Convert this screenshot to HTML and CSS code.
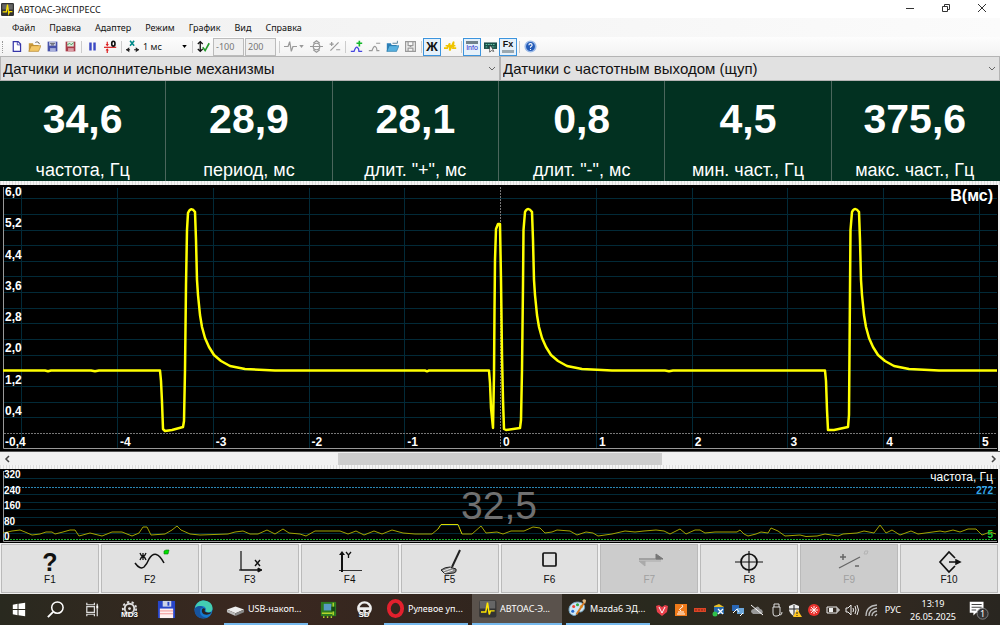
FILE: index.html
```html
<!DOCTYPE html>
<html lang="ru">
<head>
  <meta charset="UTF-8">
  <meta name="viewport" content="width=device-width, initial-scale=1.0">
  <title>АВТОАС-ЭКСПРЕСС</title>
  <link rel="stylesheet" href="styles.css">
</head>
<body>
  <header class="titlebar">
    <svg class="app-icon" viewBox="0 0 32 32"><rect width="32" height="32" rx="3" fill="#333"/><path d="M3 3h26v13H3z" fill="#666"/><path d="M4 22h9l3-18 3 22 2-5h7" fill="none" stroke="#ffe600" stroke-width="3"/></svg>
    <h1>АВТОАС-ЭКСПРЕСС</h1>
    <div class="window-buttons">
      <button aria-label="Свернуть"><svg viewBox="0 0 10 10"><path d="M1 5.500h8"/></svg></button>
      <button aria-label="Развернуть"><svg viewBox="0 0 10 10"><path d="M1.500 3.500h5v5h-5zM3.500 3.500v-2h5v5h-2"/></svg></button>
      <button aria-label="Закрыть"><svg viewBox="0 0 10 10"><path d="M1 1l8 8M9 1l-8 8"/></svg></button>
    </div>
  </header>

  <nav class="menu">
    <button>Файл</button>
    <button>Правка</button>
    <button>Адаптер</button>
    <button>Режим</button>
    <button>График</button>
    <button>Вид</button>
    <button>Справка</button>
  </nav>

  <div class="toolbar">
    <span class="grip"></span>
    <button aria-label="Новый"><svg viewBox="0 0 16 16"><path d="M4 2h6l3 3v9H4z" fill="#fff" stroke="#3535a8" stroke-width="1.500"/><path d="M9 2v4h4" fill="none" stroke="#3535a8"/></svg></button>
    <button aria-label="Открыть"><svg viewBox="0 0 16 16"><path d="M1 14V4h5l1 2h6v3" fill="#c99a3a"/><path d="M1 14l3-7h12l-3 7z" fill="#f3c766" stroke="#a87a28" stroke-width=".7"/><path d="M9 3q4-2 5 2" fill="none" stroke="#444"/></svg></button>
    <button aria-label="Сохранить"><svg viewBox="0 0 16 16"><path d="M2 2h12v12H2z" fill="#4752a8"/><path d="M4 2h8v5H4z" fill="#d5daf0"/><path d="M5 10h7v4H5z" fill="#a9b0dc"/><path d="M5 4h6M6 6h4" stroke="#333"/></svg></button>
    <button aria-label="Сохранить график"><svg viewBox="0 0 16 16"><path d="M2 2h12v12H2z" fill="#a93b48"/><path d="M4 2h8v6H4z" fill="#d8ecdc"/><path d="M5 10h7v4H5z" fill="#d99ca4"/><path d="M4 6l3-2 2 2 3-3" fill="none" stroke="#2d8b45"/></svg></button>
    <span class="sep"></span>
    <button aria-label="Пауза"><svg viewBox="0 0 16 16"><path d="M4 3h3v10H4zM9 3h3v10H9z" fill="#3b49c4"/></svg></button>
    <button aria-label="Ноль"><svg viewBox="0 0 16 16"><path d="M0 9h15" stroke="#d22" stroke-width="1.500"/><path d="M4 2v4M4 16v-5" stroke="#d22" stroke-width="1.500"/><path d="M2 5l2 3 2-3zM2 13l2-3 2 3z" fill="#d22"/><ellipse cx="11.500" cy="4.500" rx="2" ry="3" fill="none" stroke="#111" stroke-width="2"/></svg></button>
    <span class="sep"></span>
    <button aria-label="Масштаб по X"><svg viewBox="0 0 16 16"><path d="M5 1l5 6M10 1L5 7" stroke="#008a8a" stroke-width="2"/><path d="M0 12h5M10 12h6" stroke="#222" stroke-width="1.500"/><path d="M4 9l-4 3 4 3zM12 9l4 3-4 3z" fill="#222"/></svg></button>
    <select class="time-scale" aria-label="Развёртка"><option>1 мс</option></select>
    <svg class="drop" viewBox="0 0 6 4"><path d="M0 0h6L3 4z"/></svg>
    <span class="sep"></span>
    <button aria-label="Масштаб по Y"><svg viewBox="0 0 16 16"><path d="M4 3v10M1 5l3-3 3 3M1 11l3 3 3-3" fill="none" stroke="#111" stroke-width="1.600"/><path d="M7 9l3 4 5-9" fill="none" stroke="#239a2a" stroke-width="2"/></svg></button>
    <div class="limits">
      <input type="text" value="-100" aria-label="Минимум" disabled>
      <input type="text" value="200" aria-label="Максимум" disabled>
    </div>
    <span class="sep"></span>
    <button class="off" aria-label="Синхронизация"><svg viewBox="0 0 16 16"><path d="M0 8h5l2-6 2 12 2-6h5"/></svg></button>
    <svg class="drop drop-off" viewBox="0 0 6 4"><path d="M0 0h6L3 4z"/></svg>
    <button class="off" aria-label="Сдвиг"><svg viewBox="0 0 16 16"><circle cx="8" cy="8" r="4"/><path d="M0 8h16M4 4l4-3 4 3M4 12l4 3 4-3"/></svg></button>
    <button class="off" aria-label="Полярность"><svg viewBox="0 0 16 16"><path d="M3 13L13 3M2 5h5M4.500 2.500v5M10 12h5"/></svg></button>
    <span class="sep"></span>
    <button aria-label="Добавить кривую"><svg viewBox="0 0 16 16"><path d="M1 14h4q2-6 4-5t2 5h4" fill="none" stroke="#4545df" stroke-width="1.600"/><path d="M8 4h7M11.500 1v7" stroke="#13b82a" stroke-width="2"/></svg></button>
    <button class="off" aria-label="Удалить кривую"><svg viewBox="0 0 16 16"><path d="M1 13h4q2-6 4-5t2 5h3M10 4h5"/></svg></button>
    <button aria-label="Открыть кривую"><svg viewBox="0 0 16 16"><path d="M1 14V4h5l1 2h6v3" fill="#2b7fb8"/><path d="M1 14l3-7h12l-3 7z" fill="#58b1e0" stroke="#24719f" stroke-width=".7"/><path d="M8 4h6V1" fill="none" stroke="#396b89"/></svg></button>
    <button class="off" aria-label="Сохранить кривую"><svg viewBox="0 0 16 16"><path d="M2 2h12v12H2zM5 2v5h6V2M5 14v-4h6v4M7 8h2"/></svg></button>
    <span class="sep"></span>
    <button class="checked glyph-zh" aria-pressed="true">Ж</button>
    <button aria-label="Усреднение"><svg viewBox="0 0 16 16"><path d="M0 10h4l3-6v9l5-11-1 8h4M2 7h12" fill="none" stroke="#efc400" stroke-width="2"/></svg></button>
    <span class="sep"></span>
    <button class="checked info" aria-pressed="true"><span class="info-bars"></span>Info</button>
    <button aria-label="Экран"><svg viewBox="0 0 16 16"><path d="M0 3h16v8H0z" fill="#184d47"/><path d="M2 5.500h12M2 8.500h3M10 8.500h4" stroke="#7de0bb" stroke-dasharray="2 1"/><path d="M7 7v8l2-2 3 1-3-6z" fill="#fff" stroke="#222" stroke-width=".8"/></svg></button>
    <button class="checked fx" aria-pressed="true">Fx<span class="fx-line"></span></button>
    <span class="sep"></span>
    <button aria-label="Справка"><svg viewBox="0 0 16 16"><circle cx="8" cy="8" r="6.500" fill="#235bb8" stroke="#9dbbe8" stroke-width="2"/><path d="M6 6.500q0-2 2-2t2 2q0 1-2 2v1M8 11v1.300" fill="none" stroke="#fff" stroke-width="1.400"/></svg></button>
  </div>

  <div class="sources">
    <label class="source">
      <select aria-label="Режим"><option>Датчики и исполнительные механизмы</option></select>
      <svg viewBox="0 0 8 5"><path d="M1 1l3 3 3-3"/></svg>
    </label>
    <label class="source">
      <select aria-label="Тип датчика"><option>Датчики с частотным выходом (щуп)</option></select>
      <svg viewBox="0 0 8 5"><path d="M1 1l3 3 3-3"/></svg>
    </label>
  </div>

  <section class="readings">
    <div class="reading"><strong>34,6</strong><span>частота, Гц</span></div>
    <div class="reading"><strong>28,9</strong><span>период, мс</span></div>
    <div class="reading"><strong>28,1</strong><span>длит. "+", мс</span></div>
    <div class="reading"><strong>0,8</strong><span>длит. "-", мс</span></div>
    <div class="reading"><strong>4,5</strong><span>мин. част., Гц</span></div>
    <div class="reading"><strong>375,6</strong><span>макс. част., Гц</span></div>
  </section>
  <div class="splitter"></div>

  <main class="scope">
    <svg class="plot" viewBox="0 185 998 266" preserveAspectRatio="none">
      <path class="grid-line" d="M4 198.500H997M4 214.500H997M4 230.500H997M4 245.500H997M4 261.500H997M4 276.500H997M4 292.500H997M4 308.500H997M4 323.500H997M4 339.500H997M4 355.500H997M4 370.500H997M4 386.500H997M4 402.500H997M4 417.500H997"/>
      <path class="grid-line" d="M21.500 188V448M117.500 188V448M213.500 188V448M309.500 188V448M404.500 188V448M596.500 188V448M692.500 188V448M787.500 188V448M883.500 188V448M979.500 188V448"/>
      <path class="zero-line" d="M4 433.500H997M500.500 187V448"/>
      <path class="axis" d="M3.500 187V448.500H997"/>
      <path class="trace" d="M3 370.500H45l3 .8 3-.8H91l4 .8 4-.8H160L161 381 162 402 163 429 165 431 172 430 183 427 184 421 185 370 186 285 187 230 188 213Q191 206 195 212L196 240 197 280 198 295 200 315 202 327 205 338 209 347 214 355 221 361 230 366 245 369 275 370.500H425l2 .8 2-.8H489L490 383 491 408 493 428 494 375 494.500 310 495 260 496 229 498 224 500 224 501 280 502 355 503 400 504 429 506 430 520 428 521 420 522 370 523 285 523.500 230 525 212Q528 206 532 212L533 240 534 280 535 295 537 315 539 327 542 338 546 347 551 355 558 361 567 366 582 369 612 370.500H665l4 .8 4-.8H825L826 381 827 410 828 430 834 430 848 427 849 415 850 290 850.500 230 852 212Q855 206 859 212L860 240 861 280 862 295 864 315 866 327 869 338 873 347 878 355 885 361 894 366 909 369 939 370.500H997"/>
    </svg>
    <div class="y-labels">
      <span>6,0</span><span>5,2</span><span>4,4</span><span>3,6</span><span>2,8</span><span>2,0</span><span>1,2</span><span>0,4</span><span>-0,4</span>
    </div>
    <div class="x-labels">
      <span>-4</span><span>-3</span><span>-2</span><span>-1</span><span>0</span><span>1</span><span>2</span><span>3</span><span>4</span><span>5</span>
    </div>
    <div class="units">В(мс)</div>
  </main>

  <div class="scroll">
    <button aria-label="Назад"><svg viewBox="0 0 6 8"><path d="M5 1L2 4l3 3"/></svg></button>
    <input type="range" min="0" max="100" value="50" aria-label="Прокрутка графика">
    <button aria-label="Вперёд"><svg viewBox="0 0 6 8"><path d="M1 1l3 3-3 3"/></svg></button>
  </div>
  <div class="splitter"></div>

  <section class="history">
    <svg class="plot" viewBox="0 469 998 74" preserveAspectRatio="none">
      <path class="grid-line" d="M4 478.500H996M4 494.500H996M4 502.500H996M4 509.500H996M4 517.500H996M4 525.500H996M4 533.500H996"/>
      <path class="max-line" d="M4 487.500H996"/>
      <path class="min-line" d="M4 539.500H996"/>
      <path class="axis" d="M3.500 471V541.500H997"/>
      <polyline class="history-trace" points="3,533 12,531 20,530 25,532 32,535 40,534 46,532 52,532 55,534 63,532 70,530 75,530 79,536 90,533 102,536 112,532 122,532 132,536 139,533 143,527 147,527 151,535 165,534 172,530 177,526 181,530 190,534 200,535 228,534 235,532 243,531 250,534 258,534 267,530 275,534 283,529 289,533 300,534 306,536 315,531 340,531 348,534 356,531 364,535 374,531 382,534 392,530 403,533 415,534 432,534 438,529"/>
      <polyline class="history-trace history-peak" points="438,529 441,524.500 458,524.500 462,534"/>
      <polyline class="history-trace" points="462,534 472,534 481,526 486,533 497,532 503,534 511,531 524,531 533,527 540,528 545,533 552,532 557,530 570,531 577,535 586,532 593,533 598,536 612,534 625,531 635,532 644,531 656,530 664,531 670,534 680,529 686,534 695,530 700,530 705,533 715,532 737,532 740,530 744,534 748,536 756,534 761,532 768,533 771,528 778,531 785,536 800,535 806,536.500 817,536 825,534 838,536 843,534 857,533 864,531 874,533 880,525 886,533 892,530 900,535 911,531 918,534 940,531 945,532 953,530 960,532 968,529 976,529 982,535 990,532 996,534"/>
    </svg>
    <div class="history-labels"><span>320</span><span>240</span><span>160</span><span>80</span><span>0</span></div>
    <div class="history-value">32,5</div>
    <div class="history-side">
      <span>частота, Гц</span>
      <b class="max">272</b>
      <b class="min">5</b>
    </div>
  </section>

  <div class="keys">
    <button><span class="question">?</span>F1</button>
    <button><svg viewBox="0 0 36 24"><path d="M3 13q5 7 9 4 3-3 5-8 7-11 15 4" fill="none" stroke="#111" stroke-width="1.500"/><path d="M11 3v7M8 3q1 3 3 3.500Q9 7 8 10M14 3Q13 6 11 6.500 13 7 14 10" fill="none" stroke="#111" stroke-width="1.300"/><path d="M34 0h3l-1 4h-4v-3z" fill="#00e000" stroke="#087a08" stroke-width=".6"/></svg>F2</button>
    <button><svg viewBox="0 0 36 24"><path d="M9 1v19h20" fill="none" stroke="#111" stroke-width="1.200"/><path d="M7 20h22M26 18l4 2-4 2z" fill="#111" stroke="#111"/><path d="M23 10l5 6M28 10l-5 6" stroke="#111" stroke-width="1.400"/></svg>F3</button>
    <button><svg viewBox="0 0 36 24"><path d="M10 22V2M7 20.500h23" fill="none" stroke="#333"/><path d="M10 22V4" stroke="#111" stroke-width="2"/><path d="M7 5l3-4 3 4z" fill="#111"/><path d="M14 2l2.500 3L19 2M16.500 5v3" fill="none" stroke="#111" stroke-width="1.300"/></svg>F4</button>
    <button><svg viewBox="0 0 36 24"><path d="M28 0L20 17" stroke="#222" stroke-width="2"/><path d="M9 20q4-3 9-3l6 2q1 3-2 4l-9 1z" fill="#888" stroke="#222"/><path d="M11 21l8-3M12 23l9-3" stroke="#eee"/></svg>F5</button>
    <button><svg viewBox="0 0 36 24"><rect x="12" y="3" width="13" height="13" rx="1" fill="none" stroke="#111" stroke-width="1.700"/></svg>F6</button>
    <button disabled><svg viewBox="0 0 36 24"><path d="M8 9h22M25 4l7 5h-7z" fill="#777" stroke="#777"/><path d="M30 11H8l6 5v-5" fill="#aaa" stroke="#aaa"/></svg>F7</button>
    <button><svg viewBox="0 0 36 24"><circle cx="18" cy="12" r="8" fill="none" stroke="#111" stroke-width="1.700"/><path d="M4 12h28M18 1v22" stroke="#111" stroke-width="1.200"/></svg>F8</button>
    <button disabled><svg viewBox="0 0 36 24"><path d="M8 18L29 7" stroke="#666" stroke-width="1.300"/><path d="M9 7h6M12 4v6M24 16h4" stroke="#666" stroke-width="1.500"/><path d="M34 1h3l-1 3h-3z" fill="none" stroke="#b4b4b4"/></svg>F9</button>
    <button><svg viewBox="0 0 36 24"><path d="M24 8l-6-6-9 10 9 10 6-6" fill="none" stroke="#111" stroke-width="1.700"/><path d="M18 12h10M25 10l4 2-4 2z" fill="#111" stroke="#111" stroke-width="1.500"/></svg>F10</button>
  </div>

  <footer class="taskbar">
    <div class="launchers">
      <button aria-label="Пуск"><svg viewBox="0 0 20 20"><path d="M4 5l5-1v5.500H4zM10 4l7-1v6.500h-7zM4 10.500h5V16l-5-1zM10 10.500h7V17l-7-1z" fill="#fff"/></svg></button>
      <button aria-label="Поиск"><svg viewBox="0 0 20 20"><circle cx="12" cy="8" r="6" fill="none" stroke="#fff" stroke-width="1.600"/><path d="M7.500 12.500L2 18" stroke="#fff" stroke-width="2"/></svg></button>
      <button aria-label="Представление задач"><svg viewBox="0 0 20 20"><path d="M4 7h8v6H4zM4 3v2h8V3M4 17v-2h8v2M15 4v3M15 9v8" fill="none" stroke="#ddd" stroke-width="1.300"/><path d="M14 6h2v3h-2z" fill="#fff"/></svg></button>
      <button aria-label="MD3" class="md3"><svg viewBox="0 0 20 20"><circle cx="10" cy="9" r="5" fill="none" stroke="#ddd" stroke-width="2"/><circle cx="10" cy="9" r="7" fill="none" stroke="#ddd" stroke-width="2" stroke-dasharray="2.500 2.500"/><circle cx="10" cy="9" r="1.500" fill="#ddd"/></svg><b>MD3</b></button>
      <button aria-label="Файловый менеджер"><svg viewBox="0 0 20 20"><path d="M1 1h18v18H1z" fill="#2745c9"/><path d="M6 1h9v6H6z" fill="#cdd3e8"/><path d="M11 2h2v4h-2z" fill="#2745c9"/><path d="M3 9h14v10H3z" fill="#fff0f0"/><path d="M3 11.500h14M3 14.500h14" stroke="#e77" stroke-width=".8"/></svg></button>
      <button aria-label="Edge"><svg viewBox="0 0 20 20"><circle cx="10" cy="10" r="9.500" fill="#1679cd"/><path d="M1 9C2 3 6 .5 10 .5c6 0 10 4 9.500 9-1 5-8 4-7 1 1-4-7-6-11.500-1.500z" fill="#43cdb1"/><path d="M7 9c-2 5 1 10 7 9-8 4-15-2-13-9 1-3 7-4 9-1z" fill="#17549f"/><path d="M12 9.500c-2 2 0 5 6.500 3.500-2 3-8 4-10 0-1-3 1-6 3.500-3.500z" fill="#28211e"/></svg></button>
    </div>
    <button class="task"><svg viewBox="0 0 20 20"><path d="M1 11l9-3 9 3-9 4z" fill="#eee"/><path d="M1 11v3l9 4v-3z" fill="#bbb"/><path d="M19 11v3l-9 4v-3z" fill="#888"/></svg>USB-накоп...</button>
    <div class="launchers launchers-mid">
      <button aria-label="Плата"><svg viewBox="0 0 20 20"><path d="M2 2h16v15H2z" fill="#2d7b20"/><path d="M5 4h8v7H5z" fill="#579bc3"/><path d="M3 14h11M15 3v13M5 17v2M9 17v2M13 17v2" stroke="#b4d52c" stroke-width="1.500"/><path d="M13 7h4v5h-4z" fill="#174b14"/></svg></button>
      <button aria-label="SD" class="sd"><svg viewBox="0 0 20 20"><circle cx="10" cy="9" r="6.500" fill="none" stroke="#eee" stroke-width="2.500"/><path d="M3 9h14M10 9v5" stroke="#eee" stroke-width="3"/></svg><b>SD</b></button>
    </div>
    <button class="task"><svg viewBox="0 0 20 20"><ellipse cx="10" cy="10" rx="7" ry="8" fill="none" stroke="#e3202d" stroke-width="4"/></svg>Рулевое уп...</button>
    <button class="task task-active"><svg viewBox="0 0 32 32"><rect x="2" y="2" width="29" height="29" rx="3" fill="#333"/><path d="M3 3h26v13H3z" fill="#666"/><path d="M5 22h8l3-16 3 20 2-6h7" fill="none" stroke="#ffe600" stroke-width="2.500"/></svg>АВТОАС-Э...</button>
    <button class="task"><svg viewBox="0 0 20 20"><path d="M2 15C-2 7 7 1 14 4c5 2 4 7 1 9-2 2-4-1-5 1s-2 6-8 1z" fill="#cfe7f5" stroke="#73a4c3"/><circle cx="6" cy="8" r="1.600" fill="#e43"/><circle cx="10" cy="6" r="1.600" fill="#3a4"/><circle cx="5" cy="13" r="1.600" fill="#26c"/><circle cx="14" cy="8" r="1.600" fill="#e9ba22"/><path d="M18 2l-9 14" stroke="#d77a22" stroke-width="2"/><path d="M15 2q1-3 4-1l-1 4z" fill="#dfbb84"/></svg>Mazda6 ЭД...</button>
    <div class="tray">
      <svg viewBox="0 0 14 14"><path d="M1 3l3-1 3 2 3-2 3 1-1 6-5 4-5-4z" fill="#e8404b"/><path d="M4 4l3 6 3-6" fill="none" stroke="#fff"/></svg>
      <svg viewBox="0 0 14 14"><rect x="1" y="1" width="12" height="12" fill="#ef7a1a"/><path d="M3 11h8M4 9h6M7 8q-3-2 0-3t1-3" fill="none" stroke="#fff"/></svg>
      <svg viewBox="0 0 14 14"><path d="M1 5h12v4H1z" fill="#dc4526"/><path d="M2 7h10" stroke="#842312" stroke-dasharray="2 1"/></svg>
      <svg viewBox="0 0 14 14"><path d="M2 3l5-2 5 3-2 4-7 1z" fill="#e9c029"/><path d="M2 4h10v7H2z" fill="#276aae"/><circle cx="3" cy="11" r="2.500" fill="#31bf4b"/><path d="M6 6l5 5M11 6l-5 5" stroke="#fff" stroke-width="1.300"/></svg>
      <svg viewBox="0 0 14 14"><path d="M1 2h7v6H1z" fill="#2a67b5"/><path d="M6 5h7v6H6z" fill="#6ca7da"/><path d="M2 10l4-4 2 3M9 13l3-3" fill="none" stroke="#fff"/></svg>
      <svg viewBox="0 0 14 14"><path d="M3 11h8q3-1 1-4-1-1-2-1-2-5-6 0-3 0-3 3z" fill="#999"/><path d="M1 2l12 10" stroke="#fff"/></svg>
      <svg viewBox="0 0 14 14"><path d="M5 4V1h5v3M4 4h7v6q0 3-3 3H6q-2 0-2-3zM11 12q2 0 2-3" fill="none" stroke="#ddd"/></svg>
      <svg viewBox="0 0 14 14"><path d="M6 1l5 2v4q-1 4-5 6-4-2-5-6V3z" fill="#eee"/><path d="M6 2v10M1 6h10" stroke="#222"/><path d="M9 6l5 8H5z" fill="#ffc51f"/><path d="M9 9v2M9 12v1" stroke="#222"/></svg>
      <svg viewBox="0 0 14 14"><circle cx="7" cy="7" r="6" fill="#e9332f"/><path d="M7 3v8M3 7h8M4 4l6 6M10 4l-6 6" stroke="#fff" stroke-width=".9"/></svg>
      <svg viewBox="0 0 14 14"><path d="M1 4h10v6H1zM11 6h2v2h-2" fill="none" stroke="#eee"/><path d="M3 5h4v4H3z" fill="#eee"/></svg>
      <svg viewBox="0 0 14 14"><path d="M1 5h2l3-3v10L3 9H1zM8 5q1 2 0 4M10 3q2 4 0 8M12 2q3 5 0 10" fill="none" stroke="#eee"/></svg>
      <svg viewBox="0 0 14 14"><path d="M2 13Q2 3 13 2M5 13q0-7 8-8M8 13q0-4 5-5M11 13l2-2" fill="none" stroke="#bbb" stroke-width="1.300"/></svg>
    </div>
    <span class="lang">РУС</span>
    <time class="clock" datetime="2025-05-26T13:19"><span>13:19</span><span>26.05.2025</span></time>
    <button class="notify" aria-label="Уведомления"><svg viewBox="0 0 24 24"><path d="M3 3h15v12h-8l-3 3v-3H3z" fill="#fff"/><path d="M5 6h11M5 9h11M5 12h5" stroke="#333"/><circle cx="17" cy="16" r="6" fill="#333" stroke="#888"/></svg><span>1</span></button>
  </footer>
</body>
</html>
```
FILE: styles.css
```css
* {
  box-sizing: border-box;
}

body {
  margin: 0;
  min-height: 100vh;
  display: flex;
  flex-direction: column;
  background: #f0f0f0;
  color: #111;
  font-family: "Noto Sans", sans-serif;
  font-size: 9px;
}

button, select, input {
  margin: 0;
  padding: 0;
  border: 0;
  background: none;
  color: inherit;
  font: inherit;
}

.titlebar {
  display: flex;
  align-items: center;
  height: 18px;
  background: #fff;
}

.app-icon {
  width: 13px;
  height: 13px;
  margin: 0 4px 0 1px;
}

h1 {
  margin: 0;
  font-size: 9px;
  font-weight: 400;
}

.window-buttons {
  display: flex;
  margin-left: auto;
}

.window-buttons button {
  width: 36px;
  height: 16px;
}

.window-buttons svg {
  width: 10px;
  height: 10px;
  fill: none;
  stroke: #333;
}

.menu {
  display: flex;
  align-items: center;
  gap: 14px;
  height: 19px;
  padding-left: 12px;
  background: linear-gradient(to right, #f0f0f0, #fbfbfb);
}

.toolbar {
  display: flex;
  align-items: center;
  height: 19px;
  background: linear-gradient(#fdfdfd, #f2f2f2);
}

.toolbar button {
  display: flex;
  align-items: center;
  justify-content: center;
  flex-shrink: 0;
  width: 18px;
  height: 18px;
}

.toolbar button svg {
  width: 13px;
  height: 13px;
}

.grip {
  width: 2px;
  height: 12px;
  margin: 0 3px 0 2px;
  border-left: 1px dotted #999;
}

.sep {
  width: 1px;
  height: 12px;
  margin: 0 1px 0 2px;
  background: #ccc;
}

.off svg {
  fill: none;
  stroke: #999;
  stroke-width: 1.5;
}

.time-scale {
  appearance: none;
  width: 41px;
  padding-left: 2px;
}

.drop {
  width: 5px;
  height: 3px;
  margin-right: 3px;
}

.drop-off {
  fill: #999;
}

.limits {
  display: flex;
  gap: 1px;
  padding: 0 1px;
}

.limits input {
  width: 31px;
  height: 18px;
  padding-left: 2px;
  border: 1px solid #bbb;
  background: #f0f0f0;
  color: #777;
}

.toolbar .checked {
  border: 1px solid #3c94dd;
  background: #e6f1fa;
}

.toolbar .glyph-zh {
  font-size: 12px;
  font-weight: 700;
}

.toolbar .info,
.toolbar .fx {
  flex-direction: column;
  color: #2222cc;
  font-family: "Liberation Sans", sans-serif;
  font-size: 7px;
  line-height: 8px;
}

.info-bars {
  width: 12px;
  height: 3px;
  background: #71818a;
}

.toolbar .fx {
  color: #111;
  font-size: 9px;
  font-weight: 700;
}

.fx-line {
  width: 12px;
  height: 3px;
  margin-top: 2px;
  background: #9aa8b0;
}

.sources {
  display: grid;
  grid-template-columns: 1fr 1fr;
  height: 25px;
}

.source {
  display: flex;
  align-items: center;
  padding-right: 3px;
  border: 1px solid #b4b4b4;
  background: #e1e1e1;
}

.source select {
  flex: 1;
  appearance: none;
  padding-left: 2px;
  font-family: "Liberation Sans", sans-serif;
  font-size: 15px;
}

.source svg {
  width: 8px;
  height: 5px;
  fill: none;
  stroke: #666;
}

.readings {
  display: grid;
  grid-template-columns: repeat(6, 1fr);
  height: 100px;
  padding-right: 2px;
  background: #023121;
  color: #fff;
  font-family: "Liberation Sans", sans-serif;
}

.reading {
  display: flex;
  flex-direction: column;
  align-items: center;
  justify-content: space-between;
  padding: 15px 0 1px;
  border-right: 1px solid #4b665c;
}

.reading:last-child {
  border-right: 0;
}

.reading strong {
  font-size: 41px;
  line-height: 46px;
}

.reading span {
  font-size: 18px;
  line-height: 20px;
}

.splitter {
  height: 4px;
  background: repeating-linear-gradient(to right, #ddd 0 1px, #f4f4f4 1px 3px);
}

/* plot, labels and captions share one grid cell */
.scope,
.history {
  display: grid;
  grid-template: minmax(0, 1fr) / minmax(0, 1fr);
  margin-right: 2px;
  background: #000;
  color: #fff;
  font-family: "Liberation Sans", sans-serif;
}

.scope {
  flex: 1;
  min-height: 160px;
  font-size: 12px;
  font-weight: 700;
  line-height: 14px;
}

.scope > *,
.history > * {
  grid-area: 1 / 1;
}

.plot {
  width: 100%;
  height: 100%;
  min-height: 0;
}

.plot path,
.plot polyline {
  fill: none;
  vector-effect: non-scaling-stroke;
}

.plot .grid-line {
  stroke: #022a38;
}

.plot .axis {
  stroke: #999;
}

.plot .zero-line {
  stroke: #777;
  stroke-dasharray: 2 1;
}

.plot .trace {
  stroke: #ffff00;
  stroke-width: 2.5;
  stroke-linejoin: round;
}

.y-labels {
  display: flex;
  flex-direction: column;
  justify-content: space-between;
  padding: 0 0 2px 5px;
}

.x-labels {
  align-self: end;
  display: grid;
  grid-template-columns: repeat(9, 1fr) 16px;
  padding: 0 0 2px 120px;
}

.units {
  justify-self: end;
  padding: 2px 5px;
  font-size: 16px;
  line-height: 18px;
}

.scroll {
  display: flex;
  align-items: center;
  height: 14px;
  border-top: 1px solid #555;
}

.scroll button {
  display: flex;
  align-items: center;
  justify-content: center;
  width: 13px;
}

.scroll svg {
  width: 6px;
  height: 8px;
  fill: none;
  stroke: #444;
  stroke-width: 1.5;
}

.scroll input {
  flex: 1;
  appearance: none;
  height: 12px;
}

.scroll input::-webkit-slider-thumb {
  appearance: none;
  width: 324px;
  height: 12px;
  background: #cdcdcd;
}

.history {
  height: 74px;
  overflow: hidden;
}

.plot .min-line {
  stroke: #16b52c;
  stroke-dasharray: 2 1;
}

.plot .max-line {
  stroke: #2b86b3;
  stroke-dasharray: 2 1;
}

.plot .history-trace {
  stroke: #a3a300;
}

.plot .history-peak {
  stroke: #d8d800;
}

.history-labels {
  display: flex;
  flex-direction: column;
  justify-content: space-between;
  padding: 0 0 1px 4px;
  font-size: 10px;
  font-weight: 700;
  line-height: 11px;
}

.history-value {
  align-self: center;
  justify-self: center;
  color: #707070;
  font-size: 39px;
  line-height: 44px;
}

.history-side {
  display: flex;
  flex-direction: column;
  align-items: flex-end;
  justify-self: end;
  padding: 1px 5px 1px 0;
  font-size: 12px;
  line-height: 14px;
}

.history-side b {
  font-size: 10px;
}

.max {
  color: #35a5e8;
}

.min {
  margin-top: auto;
  color: #19cf35;
}

.keys {
  display: grid;
  grid-template-columns: repeat(10, 1fr);
  gap: 2px;
  height: 51px;
  padding: 1px 2px 1px 1px;
}

.keys button {
  display: flex;
  flex-direction: column;
  align-items: center;
  justify-content: center;
  padding-bottom: 2px;
  border: 1px solid #bababa;
  background: #e1e1e1;
  font-family: "Liberation Sans", sans-serif;
  font-size: 10px;
  line-height: 11px;
}

.keys svg {
  width: 36px;
  height: 24px;
  overflow: visible;
}

.keys button:disabled {
  background: #ccc;
  color: #a0a0a0;
}

.keys .question {
  height: 24px;
  font-size: 25px;
  font-weight: 700;
  line-height: 24px;
}

.taskbar {
  display: flex;
  height: 31px;
  background: linear-gradient(to right, #29291f, #3b2820 25%, #30251e 50%, #29291e 65%, #332920 85%, #292620);
  color: #fff;
}

.launchers {
  display: flex;
  align-items: center;
}

.launchers button {
  display: flex;
  flex-direction: column;
  align-items: center;
  justify-content: center;
  width: 37px;
  height: 31px;
}

.launchers-mid button {
  width: 36px;
}

.launchers svg,
.task svg {
  width: 19px;
  height: 19px;
  flex-shrink: 0;
}

.md3 b,
.sd b {
  margin-top: -8px;
  color: #fff;
  font-family: "Liberation Sans", sans-serif;
  font-size: 8px;
  line-height: 8px;
  text-shadow: 0 0 2px #000;
}

.task {
  display: flex;
  align-items: center;
  gap: 3px;
  width: 84px;
  margin: 0 2px;
  padding-left: 2px;
  border-bottom: 2px solid #76b9ed;
  white-space: nowrap;
}

.task-active {
  width: 90px;
  padding-left: 6px;
  background: #5a524c;
}

.tray {
  display: flex;
  align-items: center;
  gap: 5px;
  margin-left: auto;
}

.tray svg {
  width: 14px;
  height: 14px;
}

.lang {
  align-self: center;
  margin-left: 7px;
}

.clock {
  display: flex;
  flex-direction: column;
  align-items: center;
  justify-content: center;
  margin-left: 9px;
  line-height: 13px;
}

.notify {
  display: grid;
  width: 44px;
  place-items: center;
}

.notify > * {
  grid-area: 1 / 1;
}

.notify svg {
  width: 22px;
  height: 22px;
}

.notify span {
  padding: 8px 0 0 9px;
}
```
